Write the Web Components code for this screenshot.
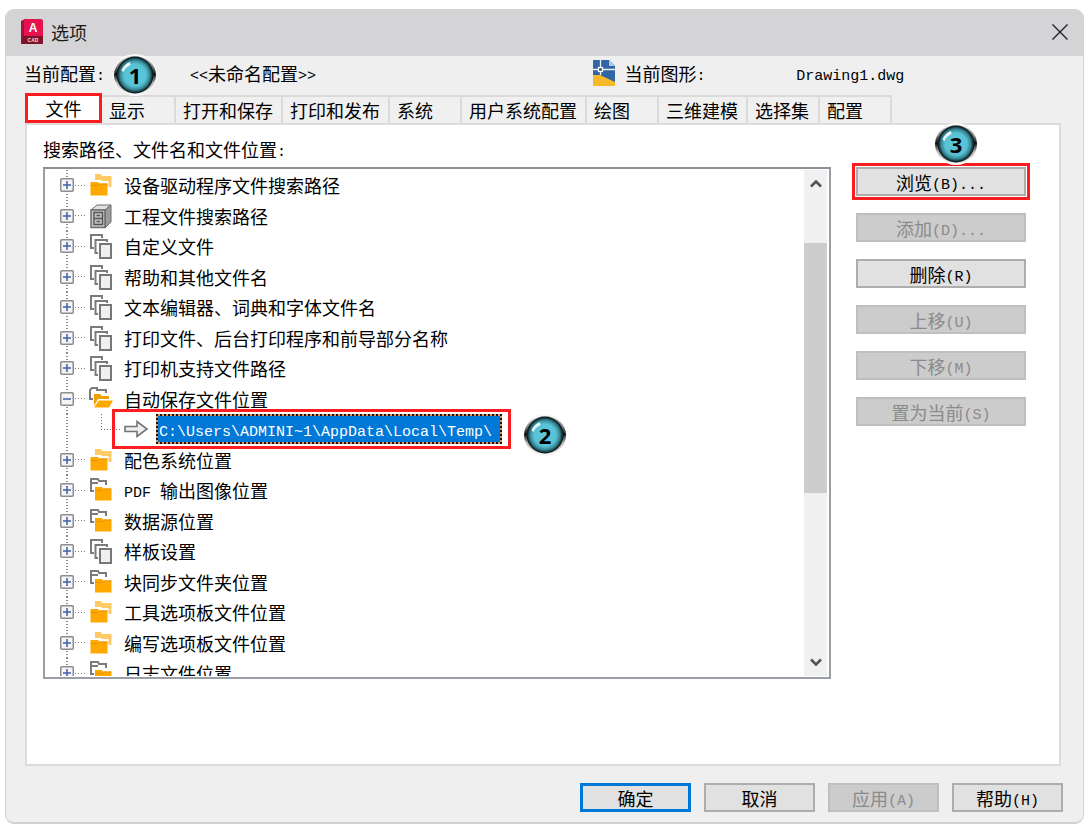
<!DOCTYPE html>
<html lang="zh-CN">
<head>
<meta charset="utf-8">
<title>选项</title>
<style>
  body { margin: 0; background: #fff; }
</style>
</head>
<body>
<options-dialog></options-dialog>
<script>
const escapeHtml = s => s.replace(/&/g, '&amp;').replace(/</g, '&lt;').replace(/>/g, '&gt;');
// Half-width runs are set in a monospaced face at half the width of a Chinese character.
const mix = s => '<span class="t">' + s.replace(/[\x21-\x7e][\x20-\x7e]*/g, m => '<span class="latin">' + escapeHtml(m) + '</span>') + '</span>';
const base = `
  *, *::before, *::after { box-sizing: border-box; }
  .t { white-space: pre; }
  .latin { font-family: "Liberation Mono", monospace; font-size: 15px; line-height: 1; vertical-align: 1px; }
`;
const define = (name, render) => customElements.define(name, class extends HTMLElement {
  connectedCallback() {
    if (this.shadowRoot) return;
    const tpl = document.createElement('template');
    tpl.innerHTML = render(this);
    this.attachShadow({ mode: 'open' }).append(tpl.content.cloneNode(true));
  }
});

define('step-badge', el => `
<style>
  ${base}
  :host { display: block; width: 44px; height: 44px; position: absolute; z-index: 5; pointer-events: none; }
  .disc { display: grid; place-items: center; width: 44px; height: 44px; }
  svg, b { grid-area: 1 / 1; }
  b { position: relative; font: bold 22px/24px "Open Sans", "Noto Sans", sans-serif; color: #000; }
</style>
<div class="disc">
  <svg width="44" height="44" viewBox="0 0 44 44" aria-hidden="true">
    <defs>
      <linearGradient id="ring" x1="0" y1="0" x2="0" y2="1">
        <stop offset="0" stop-color="#d8d8d8"/><stop offset=".3" stop-color="#777"/>
        <stop offset=".48" stop-color="#0a0a0a"/><stop offset=".55" stop-color="#444"/>
        <stop offset=".7" stop-color="#b9b2b4"/><stop offset="1" stop-color="#ddd"/>
      </linearGradient>
      <radialGradient id="ball">
        <stop offset="0" stop-color="#5cc8dc"/><stop offset=".6" stop-color="#58c1d5"/>
        <stop offset=".8" stop-color="#378795"/><stop offset=".95" stop-color="#0c2529"/><stop offset="1" stop-color="#111"/>
      </radialGradient>
    </defs>
    <ellipse cx="22" cy="22" rx="22" ry="21" fill="#f8f8f8"/>
    <ellipse cx="22" cy="22" rx="21" ry="19" fill="url(#ring)"/>
    <circle cx="22" cy="22" r="18.500" fill="url(#ball)"/>
    <path d="M8.500 17.500Q11 11 17 9L17.500 12Q12 14.500 10.500 19Z" fill="#fff" opacity=".88"/>
  </svg>
  <b><slot></slot></b>
</div>`);

define('title-bar', el => `
<style>
  ${base}
  :host { display: flex; align-items: center; height: 46px; padding: 0 14px 3px 15px; background: #d4d4d6;
    font: 18px/24px "Noto Sans CJK SC", sans-serif; color: #1b1b1b; }
  h1 { flex: 1; margin: 0 0 0 8px; font: inherit; }
  .logo { flex: none; }
  button { display: grid; place-items: center; width: 18px; height: 18px; padding: 0; border: 0; background: none; }
</style>
<svg class="logo" width="22" height="26" viewBox="0 0 22 26" aria-hidden="true">
  <path d="M0 2L4 0V24L0 25Z" fill="#a80f3d"/>
  <path d="M3 1Q3 0 4 0H20Q22 0 22 2V24Q22 25 21 25H1L3 17Z" fill="#e6114f"/>
  <path d="M3 17H22V24Q22 25 21 25H1V18Z" fill="#7e1330"/>
  <text x="12" y="13" text-anchor="middle" font-family="Liberation Sans" font-weight="bold" font-size="12" fill="#fff">A</text>
  <text x="12" y="23" text-anchor="middle" font-family="Liberation Sans" font-weight="bold" font-size="5" fill="#f5d5de">CAD</text>
</svg>
<h1><slot></slot></h1>
<button aria-label="关闭"><svg width="18" height="18" viewBox="0 0 18 18"><path d="M1.500 1.500L16.500 16.500M16.500 1.500L1.500 16.500" stroke="#222" stroke-width="1.400" fill="none"/></svg></button>`);

define('config-header', el => `
<style>
  ${base}
  :host { display: grid; grid-template-columns: 166px 403fr 204fr 267fr; align-items: center; height: 37px;
    padding: 0 20px 3px 18px; position: relative; }
  .drawing { display: flex; align-items: center; gap: 10px; }
  step-badge { left: 107px; top: -3px; }
</style>
<span>${mix('当前配置:')}</span>
<span>${mix('<<未命名配置>>')}</span>
<span class="drawing">
  <svg width="22" height="26" viewBox="0 0 22 26" aria-hidden="true">
    <path d="M0 0H16L22 6V26H0Z" fill="#3165a5"/>
    <path d="M16 0L22 6H16Z" fill="#b4c8df"/>
    <path d="M0 15H7L22 22V26H0Z" fill="#f7b928"/>
    <path d="M7.500 0V8M7.500 11V15M0 9.500H5.500M10 9.500H22" stroke="#e9f1f8" stroke-width="1.300"/>
    <rect x="5.500" y="7.500" width="4" height="4" fill="#3165a5" stroke="#fff" stroke-width="1.200"/>
  </svg>
  ${mix('当前图形:')}
</span>
<span>${mix('Drawing1.dwg')}</span>
<step-badge>1</step-badge>`);

define('tab-strip', el => `
<style>
  ${base}
  :host { display: block; margin: 0 20px 0 19px; }
  [role=tablist] { display: flex; height: 30px; align-items: flex-end; }
  button { height: 28px; min-width: 72px; padding: 0 8px 0 7px; border: 1px solid #dadada; border-width: 2px 0 0 2px;
    background: #f0f0f0; font: inherit; color: #000; text-align: left; }
  button:last-child { border-right-width: 2px; min-width: 74px; }
  button[aria-selected=true] { height: 30px; min-width: 77px; padding: 0 0 4px; border: 3px solid #fb1d1f; background: #fff; text-align: center; }
  button[aria-selected=true] + button { border-left-width: 0; }
</style>
<div role="tablist">
${['文件', '显示', '打开和保存', '打印和发布', '系统', '用户系统配置', '绘图', '三维建模', '选择集', '配置']
  .map((t, i) => `<button role="tab" aria-selected="${i === 0}">${t}</button>`).join('')}
</div>`);

define('push-button', el => `
<style>
  ${base}
  :host { display: block; position: relative; }
  button { display: block; width: 100%; height: 29px; padding: 0; border: 2px solid #adadad; background: #e1e1e1;
    font: inherit; color: #000; line-height: 24px; }
  button:disabled { border-color: #bfbfbf; background: #ccc; color: #8a8a8a; }
  :host([primary]) button { border: 3px solid #0078d7; line-height: 22px; }
  :host([marked])::after { content: ""; position: absolute; inset: -4px; border: 3px solid #fb1d1f; }
</style>
<button ${el.hasAttribute('disabled') ? 'disabled' : ''}>${mix(el.getAttribute('label'))}</button>
<slot></slot>`);

const grayFolder = `<path d="M4 13H1V1H8L9 3H16V7M1 5H8" fill="none" stroke="#7b7b7b" stroke-width="2"/>`;
const icons = {
  folders: `<path d="M5 7V1H11L12 3H21.500V14H18.500V8H12L11 7Z" fill="#ffcb66"/>
    <path d="M0.500 9H8L9 10.500H17.500V22.500H0.500Z" fill="#ffa900"/><path d="M0.500 12.500H8L9.500 11H17.500" fill="none" stroke="#e8940a"/>`,
  cabinet: `<path d="M1 6L7 1H21L15 6Z" fill="#e2e2e2" stroke="#6d6d6d"/><path d="M15 6L21 1V18L15 24Z" fill="#9c9c9c" stroke="#6d6d6d"/>
    <rect x="1" y="6" width="14" height="17.500" fill="#c4c4c4" stroke="#6d6d6d" stroke-width="1.500"/>
    <path d="M4 8.500H12.500V20.500H4ZM4 14.500H12.500M6.500 11.500H10M6.500 17.500H10" fill="none" stroke="#555" stroke-width="1.400"/>`,
  sheets: `<path d="M4 14H1V1H12V4" fill="none" stroke="#7b7b7b" stroke-width="2"/>
    <path d="M8 19H5.500V6H17V8" fill="none" stroke="#7b7b7b" stroke-width="2"/>
    <rect x="10" y="10" width="11" height="14" fill="#f0f0f0" stroke="#777" stroke-width="2"/>`,
  mixed: `${grayFolder}<path d="M5 9H12L13 10.500H21.500V22.500H5Z" fill="#ffa900"/><path d="M5 12.500H12L13.500 11H21.500" fill="none" stroke="#e8940a"/>`,
  open: `<path d="M3 12H0V3L2 1H7V3H16V6" fill="none" stroke="#7b7b7b" stroke-width="2"/>
    <path d="M4 7H10L12 9H19V12H8L4 19Z" fill="#f0a000"/><path d="M9 13.500H23L19 20.500H4Z" fill="#ffa900"/><path d="M8 12.500H20" stroke="#fff"/>`
};

define('tree-item', el => {
  const label = el.getAttribute('label'), icon = el.getAttribute('icon'), child = el.hasAttribute('child');
  const open = el.hasAttribute('open');
  return `
<style>
  ${base}
  :host { display: flex; align-items: center; height: 30px; padding-left: 15px; position: relative;
    background: repeating-linear-gradient(#8b8b8b 0 1px, #fff 1px 3px) 21px 0 / 2px 100% no-repeat; }
  :host(:nth-child(even)) { height: 31px; }
  .dots { flex: none; width: 11px; height: 1px; margin: 0 4px 0 1px; background: repeating-linear-gradient(90deg, #777 0 1px, #fff 1px 3px); }
  .icon { flex: none; width: 24px; height: 24px; margin-right: 10px; overflow: visible; }
  .expander { flex: none; }
  .elbow { flex: none; align-self: flex-start; width: 21px; height: 16px; margin-left: 41px;
    background: repeating-linear-gradient(#777 0 1px, #fff 1px 3px) 0 0 / 1px 100% no-repeat,
      repeating-linear-gradient(90deg, #777 0 1px, #fff 1px 3px) 0 100% / 100% 1px no-repeat; }
  .arrow { flex: none; margin: 0 8px 0 2px; }
  .selected { padding: 0 8px 0 1px; border: 2px dotted #1c1208; line-height: 26px; color: #fff;
    background: linear-gradient(#0078d7, #0078d7) padding-box, #e49450; }
  .frame { display: flex; align-items: center; position: relative; }
  .mark { position: absolute; inset: -5px -9px -5px -10px; border: 3px solid #fb1d1f; z-index: 2; }
  step-badge { right: -65px; top: -1px; }
</style>
${child ? `<span class="elbow"></span>
<div class="frame">
  <svg class="arrow" width="24" height="18" viewBox="0 0 24 18" aria-hidden="true"><path d="M1 6.500H13V1.500L23 9L13 16.500V11.500H1Z" fill="#eee" stroke="#737373" stroke-width="1.600"/></svg>
  <span class="selected">${mix(label)}</span><span class="mark"></span><step-badge>2</step-badge>
</div>` : `
<svg class="expander" width="14" height="14" viewBox="0 0 14 14" aria-hidden="true">
  <rect x=".750" y=".750" width="12.500" height="12.500" rx="1" fill="#f5f5f5" stroke="#8c8c8c" stroke-width="1.500"/>
  <path d="M3 7H11${open ? '' : 'M7 3V11'}" stroke="#3f5fa8" stroke-width="1.500"/>
</svg>
<span class="dots"></span>
<svg class="icon" viewBox="0 0 24 24" aria-hidden="true">${icons[icon]}</svg>
${mix(label)}`}`;
});

define('scroll-bar', el => `
<style>
  ${base}
  :host { display: flex; flex-direction: column; align-items: center; width: 23px; background: #f0f0f0; }
  svg { flex: none; margin: 10px 0; }
  .track { flex: 1; align-self: stretch; display: flex; flex-direction: column; }
  .before { flex: 45; } .thumb { flex: 250; background: #cdcdcd; } .after { flex: 155; }
</style>
<svg width="12" height="8" viewBox="0 0 12 8"><path d="M1 6.500L6 1.500L11 6.500" fill="none" stroke="#555" stroke-width="2.600"/></svg>
<div class="track"><span class="before"></span><span class="thumb"></span><span class="after"></span></div>
<svg width="12" height="8" viewBox="0 0 12 8"><path d="M1 1.500L6 6.500L11 1.500" fill="none" stroke="#555" stroke-width="2.600"/></svg>`);

define('path-tree', el => `
<style>
  ${base}
  :host { display: flex; height: 512px; padding: 1px 2px 1px 0; border: 2px solid #9a9ea6; border-top-color: #8b8f98; background: #fff; }
  .items { flex: 1; min-width: 0; overflow: hidden; }
</style>
<div class="items" role="tree">
${[
  ['folders', '设备驱动程序文件搜索路径'], ['cabinet', '工程文件搜索路径'], ['sheets', '自定义文件'],
  ['sheets', '帮助和其他文件名'], ['sheets', '文本编辑器、词典和字体文件名'],
  ['sheets', '打印文件、后台打印程序和前导部分名称'], ['sheets', '打印机支持文件路径'],
  ['open', '自动保存文件位置', 'open aria-expanded="true"'],
  ['', 'C:\\Users\\ADMINI~1\\AppData\\Local\\Temp\\', 'child aria-level="2" aria-selected="true"'],
  ['folders', '配色系统位置'], ['mixed', 'PDF 输出图像位置'], ['mixed', '数据源位置'], ['sheets', '样板设置'],
  ['mixed', '块同步文件夹位置'], ['folders', '工具选项板文件位置'], ['folders', '编写选项板文件位置'], ['mixed', '日志文件位置']
].map(([icon, label, extra = '']) => `<tree-item role="treeitem" icon="${icon}" label="${label}" ${extra}></tree-item>`).join('')}
</div>
<scroll-bar></scroll-bar>`);

define('files-page', el => `
<style>
  ${base}
  :host { display: grid; grid-template-columns: 1fr 170px; column-gap: 25px; margin: 0 22px 0 19px;
    padding: 10px 33px 85px 16px; border: 2px solid #dcdcdc; background: #fff; }
  h2 { grid-column: 1 / 3; margin: 0; font: inherit; line-height: 28px; padding-bottom: 4px; }
  .actions { display: flex; flex-direction: column; gap: 17px; }
  step-badge { left: 78px; top: -45px; }
</style>
<h2>${mix('搜索路径、文件名和文件位置:')}</h2>
<path-tree></path-tree>
<div class="actions">
  <push-button marked label="浏览(B)..."><step-badge>3</step-badge></push-button>
  <push-button disabled label="添加(D)..."></push-button>
  <push-button label="删除(R)"></push-button>
  <push-button disabled label="上移(U)"></push-button>
  <push-button disabled label="下移(M)"></push-button>
  <push-button disabled label="置为当前(S)"></push-button>
</div>`);

define('options-dialog', el => `
<style>
  ${base}
  :host { display: block; margin: 9px 7px 8px 5px; border: 1px solid #d0d0d0; border-bottom-width: 2px; border-radius: 9px;
    background: #efefef; overflow: hidden; font: 18px/24px "Noto Sans CJK SC", sans-serif; color: #000; }
  footer { display: flex; justify-content: flex-end; gap: 13px; padding: 17px 20px 10px; }
  footer push-button { width: 111px; }
</style>
<title-bar>选项</title-bar>
<config-header></config-header>
<tab-strip></tab-strip>
<files-page></files-page>
<footer>
  <push-button primary label="确定"></push-button>
  <push-button label="取消"></push-button>
  <push-button disabled label="应用(A)"></push-button>
  <push-button label="帮助(H)"></push-button>
</footer>`);
</script>
</body>
</html>
